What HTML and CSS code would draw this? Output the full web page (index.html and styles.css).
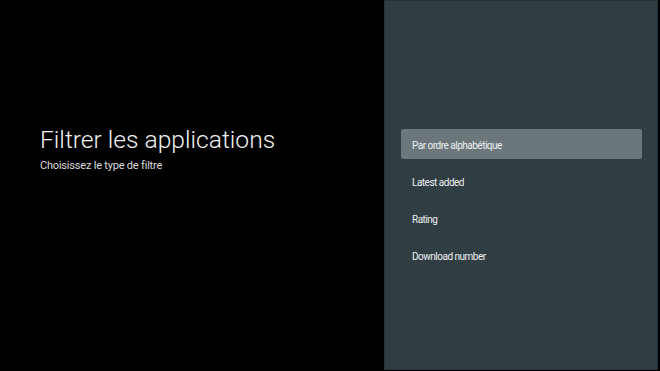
FILE: index.html
```html
<!DOCTYPE html>
<html lang="fr">
<head>
<meta charset="utf-8">
<link rel="stylesheet" href="styles.css">
</head>
<body>
<div class="screen">
  <div class="intro">
    <h1 class="title">Filtrer les applications</h1>
    <p class="subtitle">Choisissez le type de filtre</p>
  </div>
  <div class="panel">
    <ul class="options">
      <li class="option selected">Par ordre alphabétique</li>
      <li class="option">Latest added</li>
      <li class="option">Rating</li>
      <li class="option">Download number</li>
    </ul>
  </div>
</div>
</body>
</html>
```
FILE: styles.css
```css
html, body {
  margin: 0;
  padding: 0;
  background: #000;
  height: 100%;
}
.screen {
  display: flex;
  height: 371px;
  width: 660px;
  font-family: Roboto, "Noto Sans", sans-serif;
  color: #fff;
}
.intro {
  width: 384px;
  padding-left: 40px;
  display: flex;
  flex-direction: column;
  justify-content: center;
  padding-bottom: 74px;
  box-sizing: border-box;
}
.title {
  margin: 0;
  font-weight: 300;
  font-size: 24.6px;
  line-height: 30px;
  color: #f2f2f2;
}
.subtitle {
  margin: 4px 0 0;
  font-size: 11px;
  letter-spacing: -0.2px;
  line-height: 14px;
  color: #dcdcdc;
}
.panel {
  flex: 1;
  background: #303e43;
  border: 1px solid #263236;
  margin: 0 2px 1px 0;
  display: flex;
  flex-direction: column;
  justify-content: center;
  padding: 28px 15px 0 16px;
}
.options {
  list-style: none;
  margin: 0;
  padding: 0;
  display: flex;
  flex-direction: column;
  gap: 7px;
}
.option {
  box-sizing: border-box;
  height: 30px;
  padding-top: 4px;
  line-height: 26px;
  padding-left: 11px;
  font-size: 10px;
  letter-spacing: -0.5px;
  color: #eef0f0;
  border-radius: 2px;
}
.option.selected {
  background: #6b777b;
}
```
